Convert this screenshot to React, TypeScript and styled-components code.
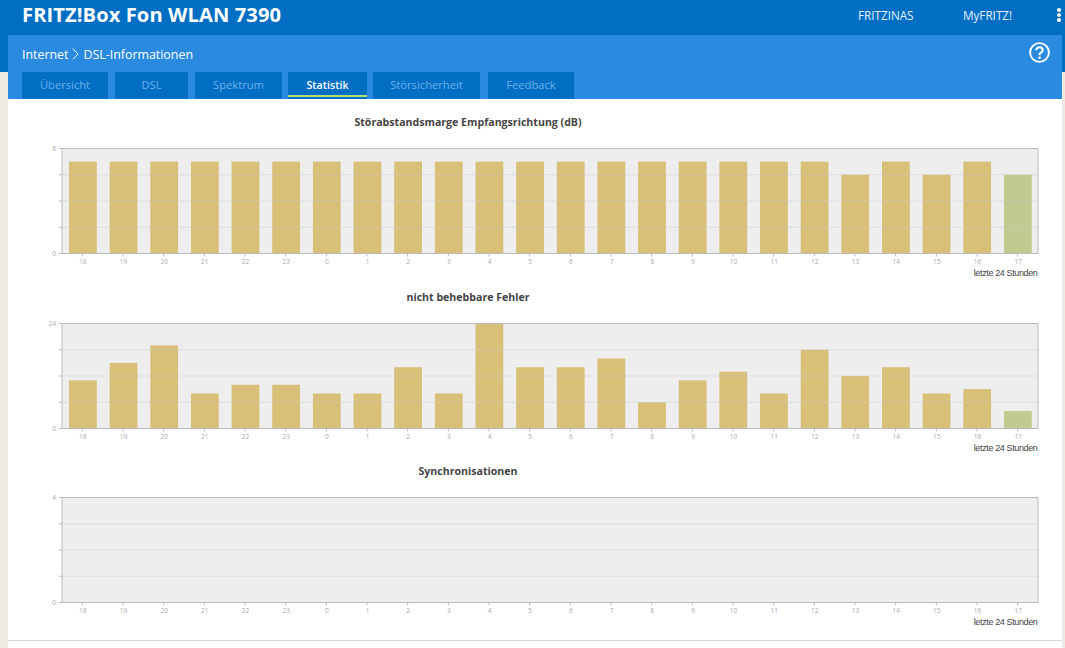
import React from "react";
import styled, { createGlobalStyle } from "styled-components";

const Global = createGlobalStyle`
  html, body { margin: 0; padding: 0; background: #efebe4; overflow: hidden; }
  * { box-sizing: border-box; }
  body { font-family: "Open Sans", "Liberation Sans", sans-serif; }
`;

const Page = styled.div`
  position: relative;
  width: 1065px;
  height: 648px;
  overflow: hidden;
  background: linear-gradient(#006ec2 0, #006ec2 72px, #efebe4 72px);
`;
const Header = styled.header`
  height: 35px;
  display: flex;
  align-items: center;
  padding: 0 4px 0 22px;
  color: #fff;
`;
const Brand = styled.div`
  font-family: "Open Sans", sans-serif;
  font-weight: 700;
  font-size: 20.1px;
  letter-spacing: 0.1px;
  white-space: nowrap;
  flex: 1;
  margin-top: -6px;
`;
const NavLink = styled.a<{ $w: number }>`
  width: ${(p) => p.$w}px;
  font-size: 11.7px;
  color: #e6f1fb;
  white-space: nowrap;
  margin-top: -5px;
`;
const Dots = styled.div`
  display: flex;
  flex-direction: column;
  gap: 1.5px;
  margin-top: -5px;
  i { display: block; width: 4px; height: 3.5px; border-radius: 50%; background: #fff; }
`;
const Shell = styled.div`
  margin: 0 3px 0 8px;
  background: #fff;
  height: 613px;
`;
const Panel = styled.div`
  height: 64px;
  background: #2a8ae0;
  display: flex;
  flex-direction: column;
  padding-left: 14px;
`;
const TitleRow = styled.div`
  height: 37px;
  display: flex;
  align-items: center;
  justify-content: space-between;
  color: #fff;
  font-size: 12.4px;
  padding-right: 12px;
  svg.help { margin-top: -2px; }
`;
const Crumb = styled.div`
  display: flex;
  align-items: center;
  gap: 4px;
  margin-top: 1px;
`;
const Tabs = styled.nav`
  display: flex;
  height: 27px;
`;
const Tab = styled.div<{ $w: number; $ml: number; $active?: boolean }>`
  width: ${(p) => p.$w}px;
  margin-left: ${(p) => p.$ml}px;
  height: 27px;
  background: #006ec2;
  color: ${(p) => (p.$active ? "#fff" : "#6db0ec")};
  font-size: ${(p) => (p.$active ? 10.7 : 11.2)}px;
  font-weight: ${(p) => (p.$active ? 600 : 400)};
  display: flex;
  align-items: center;
  justify-content: center;
  padding-bottom: 2px;
  ${(p) => (p.$active ? "box-shadow: inset 0 -2px 0 #006ec2, inset 0 -4px 0 #b2e06c;" : "")}
`;
const Content = styled.main`
  height: 542px;
  padding-top: 16px;
  border-bottom: 1px solid #d6d6d6;
`;
const Section = styled.section`
  height: 174.5px;
  display: flex;
  flex-direction: column;
`;
const ChartTitle = styled.h2`
  margin: 0;
  width: 920px;
  text-align: center;
  font-size: 10.6px;
  line-height: 14px;
  font-weight: 700;
  color: #444;
`;
const Plot = styled.svg`
  display: block;
  margin-top: 11px;
  width: 1054px;
  height: 126px;
`;
const Caption = styled.div`
  width: 1029.5px;
  text-align: right;
  font-family: "Liberation Sans", sans-serif;
  font-size: 9px;
  letter-spacing: -0.37px;
  line-height: 10px;
  color: #444;
  margin-top: 2px;
`;

const hours = [18, 19, 20, 21, 22, 23, 0, 1, 2, 3, 4, 5, 6, 7, 8, 9, 10, 11, 12, 13, 14, 15, 16, 17];
const L = 54;
const W = 976;
const T = 8.5;
const H = 105;

function Chart({ title, max, values }: { title: string; max: number; values: number[] }) {
  const step = W / 24;
  return (
    <Section>
      <ChartTitle>{title}</ChartTitle>
      <Plot viewBox="0 0 1054 126">
        <rect x={L} y={T} width={W} height={H} fill="#eeeeee" />
        {values.map((v, i) => {
          const h = (v / max) * H;
          return (
            <rect key={i} x={L + 7 + 40.65 * i} y={T + H - h} width={27.8} height={h} fill={i === 23 ? "#c1cb8f" : "#d8c079"} />
          );
        })}
        {[1, 2, 3].map((k) => (
          <g key={k}>
            <line x1={L} x2={L + W} y1={T + (k * H) / 4} y2={T + (k * H) / 4} stroke="#c8c8c8" strokeOpacity={0.45} />
            <line x1={L - 3} x2={L} y1={T + (k * H) / 4} y2={T + (k * H) / 4} stroke="#b5bac2" />
          </g>
        ))}
        <path d={`M${L - 3} ${T}H${L + W}V${T + H}H${L - 3}M${L} ${T}V${T + H}`} fill="none" stroke="#b8bcc2" strokeWidth={1} />
        <text x={L - 6} y={T + 2} textAnchor="end" fontSize={6.5} fill="#aaaaaa" fontFamily="Open Sans, sans-serif">{max}</text>
        <text x={L - 6} y={T + H + 2} textAnchor="end" fontSize={6.5} fill="#aaaaaa" fontFamily="Open Sans, sans-serif">0</text>
        {hours.map((h, i) => {
          const cx = L + step * (i + 0.5);
          return (
            <g key={i}>
              <line x1={cx} x2={cx} y1={T + H} y2={T + H + 3} stroke="#b8bcc2" />
              <text x={cx + 0.5} y={T + H + 10} textAnchor="middle" fontSize={6.5} fill="#aaaaaa" fontFamily="Open Sans, sans-serif">{h}</text>
            </g>
          );
        })}
      </Plot>
      <Caption>letzte 24 Stunden</Caption>
    </Section>
  );
}

const snr = [7, 7, 7, 7, 7, 7, 7, 7, 7, 7, 7, 7, 7, 7, 7, 7, 7, 7, 7, 6, 7, 6, 7, 6];
const errors = [11, 15, 19, 8, 10, 10, 8, 8, 14, 8, 24, 14, 14, 16, 6, 11, 13, 8, 18, 12, 14, 8, 9, 4];
const sync = new Array(24).fill(0);

const tabs = [
  { label: "Übersicht", w: 86, ml: 0 },
  { label: "DSL", w: 73, ml: 7 },
  { label: "Spektrum", w: 87, ml: 7 },
  { label: "Statistik", w: 79, ml: 6, active: true },
  { label: "Störsicherheit", w: 107, ml: 6 },
  { label: "Feedback", w: 86, ml: 8 },
];

export default function App() {
  return (
    <Page>
      <Global />
      <Header>
        <Brand>FRITZ!Box Fon WLAN 7390</Brand>
        <NavLink $w={105}>FRITZINAS</NavLink>
        <NavLink $w={94}>MyFRITZ!</NavLink>
        <Dots><i /><i /><i /></Dots>
      </Header>
      <Shell>
        <Panel>
          <TitleRow>
            <Crumb>
              Internet
              <svg width="7" height="12" viewBox="0 0 7 12" fill="none" stroke="#fff" strokeWidth="1">
                <path d="M0.8 0.6 L6 6 L0.8 11.4" />
              </svg>
              DSL-Informationen
            </Crumb>
            <svg className="help" width="21" height="21" viewBox="0 0 21 21" fill="none">
              <circle cx="10.5" cy="10.5" r="9.4" stroke="#fff" strokeWidth="1.9" />
              <path d="M7.2 8.2c0-1.9 1.5-3 3.3-3s3.2 1 3.2 2.8c0 1.4-.8 2-1.8 2.7-.9.5-1.3 1-1.3 2v.5" stroke="#fff" strokeWidth="2.1" />
              <circle cx="10.6" cy="15.8" r="1.3" fill="#fff" />
            </svg>
          </TitleRow>
          <Tabs>
            {tabs.map((t) => (
              <Tab key={t.label} $w={t.w} $ml={t.ml} $active={t.active}>{t.label}</Tab>
            ))}
          </Tabs>
        </Panel>
        <Content>
          <Chart title="Störabstandsmarge Empfangsrichtung (dB)" max={8} values={snr} />
          <Chart title="nicht behebbare Fehler" max={24} values={errors} />
          <Chart title="Synchronisationen" max={4} values={sync} />
        </Content>
      </Shell>
    </Page>
  );
}
